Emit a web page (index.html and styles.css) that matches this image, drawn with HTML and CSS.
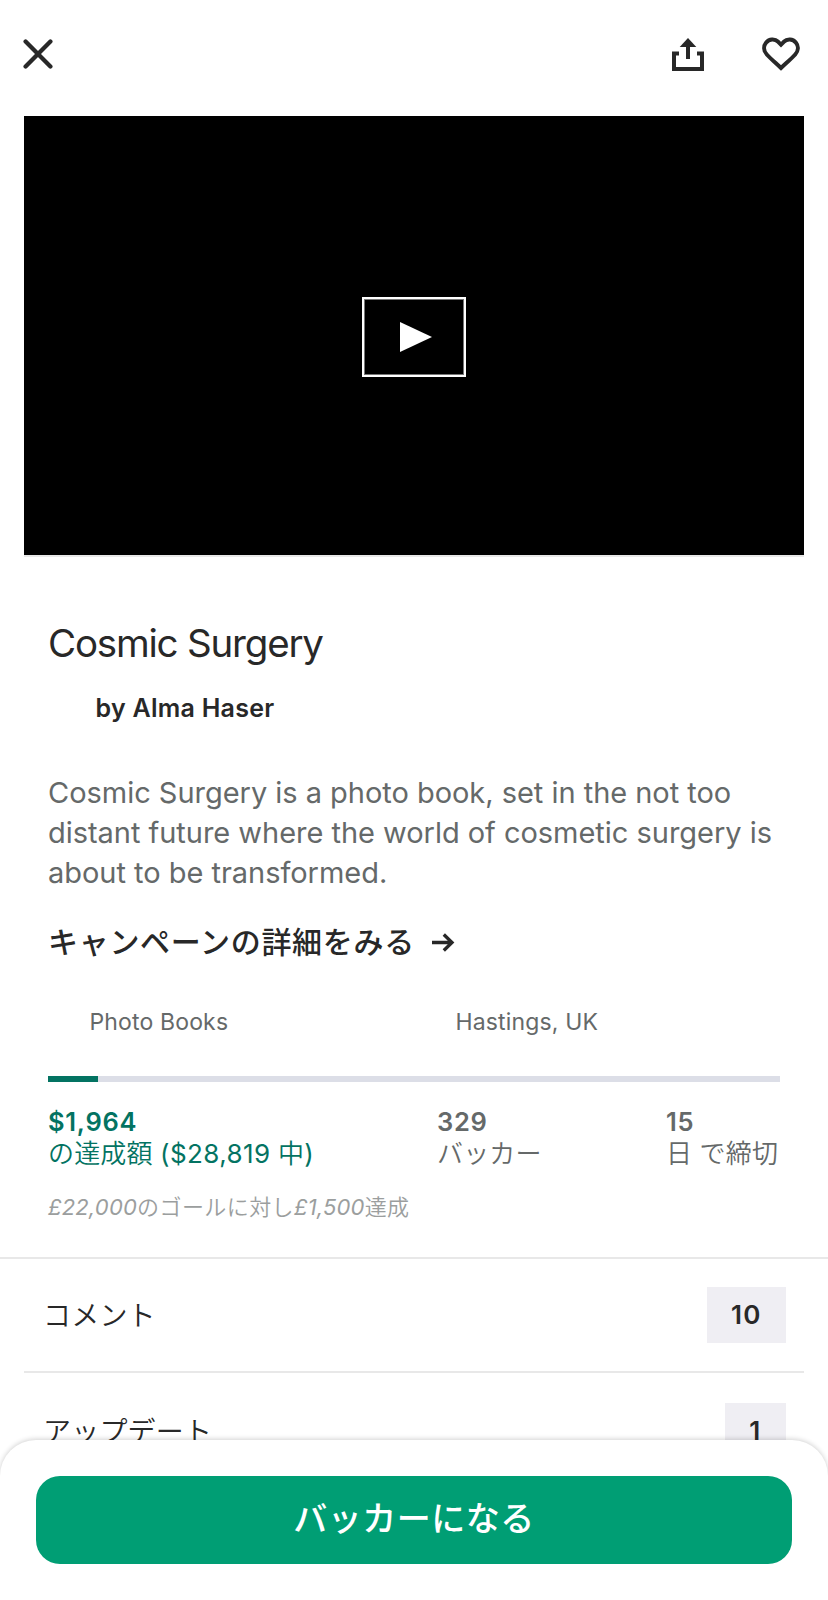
FILE: index.html
```html
<!DOCTYPE html>
<html lang="ja">
<head>
<meta charset="utf-8">
<title>Cosmic Surgery</title>
<link rel="stylesheet" href="styles.css">
</head>
<body>
<div class="screen">
  <header class="topbar">
    <svg class="close" width="30" height="30" viewBox="0 0 30 30"><path d="M2.6 2.6 27.4 27.4M27.4 2.6 2.6 27.4"/></svg>
    <div class="actions">
      <svg class="share" width="32" height="33" viewBox="0 0 32 33"><path d="M7 15.5H2V31H30V15.5H25M16 21V7"/><path class="solid" d="M16 0 24.3 9H7.7Z"/></svg>
      <svg class="heart" width="38" height="34" viewBox="0 0 38 34"><path d="M19 31C13.5 25.8 8.4 21.5 4.8 17.5 1.7 13.9 1.2 9.1 4 5.7 7.2 1.8 12.8 1.5 16.2 4.8L19 7.7 21.8 4.8C25.2 1.5 30.8 1.8 34 5.7 36.8 9.1 36.3 13.9 33.2 17.5 29.6 21.5 24.5 25.8 19 31Z"/></svg>
    </div>
  </header>
  <div class="video">
    <div class="play"><svg width="32" height="30" viewBox="0 0 32 30"><path d="M0 0 32 15 0 30Z"/></svg></div>
  </div>
  <main class="project">
    <h1 class="title">Cosmic Surgery</h1>
    <p class="creator">by Alma Haser</p>
    <p class="blurb">Cosmic Surgery is a photo book, set in the not too<br>distant future where the world of cosmetic surgery is<br>about to be transformed.</p>
    <a class="more"><span>キャンペーンの詳細をみる</span><svg width="23" height="19" viewBox="0 0 23 19"><path d="M0 9.5H20M11.8 1.5 20 9.5 11.8 17.5"/></svg></a>
    <div class="meta"><span class="category">Photo Books</span><span class="place">Hastings, UK</span></div>
    <div class="progress"><div class="progress-fill"></div></div>
    <div class="stats">
      <div class="stat pledged"><b>$1,964</b><span>の達成額 <i>($28,819</i> 中<i>)</i></span></div>
      <div class="stat"><b>329</b><span>バッカー</span></div>
      <div class="stat"><b>15</b><span>日 で締切</span></div>
    </div>
    <p class="goal"><em>£22,000</em>のゴールに対し<em>£1,500</em>達成</p>
  </main>
  <section class="rows">
    <div class="row"><span>コメント</span><b class="badge">10</b></div>
    <div class="row second"><span>アップデート</span><b class="badge">1</b></div>
  </section>
  <footer class="sheet"><button class="back">バッカーになる</button></footer>
</div>
</body>
</html>
```
FILE: styles.css
```css
* { box-sizing: border-box; }
body { margin: 0; background: #fff; color: #282828; font-family: Inter, "Noto Sans CJK JP", sans-serif; }
h1, p { margin: 0; }
svg { display: block; fill: none; }
.screen { position: relative; height: 1600px; overflow: hidden; }
.topbar { height: 116px; padding: 37px 28px 0 23px; display: flex; justify-content: space-between; align-items: flex-start; }
.close { margin-top: 2px; stroke: #282828; stroke-width: 4.3; stroke-linecap: round; }
.actions { display: flex; gap: 58px; }
.share, .heart { stroke: #282828; stroke-width: 4; }
.share { margin-top: 1px; }
.share .solid { fill: #282828; stroke: none; }
.video { height: 441px; margin: 0 24px; background: #000; border-bottom: 2px solid #e8e8e8; display: flex; align-items: center; justify-content: center; }
.play { width: 104px; height: 80px; margin-top: 3px; border: 2px solid #fff; outline: 1px solid #777; outline-offset: -3px; display: flex; align-items: center; justify-content: center; padding-left: 4px; }
.play svg { fill: #fff; }
.project { height: 702px; padding: 62px 48px 0; border-bottom: 2px solid #e8e8e8; }
.title { font-size: 38.5px; line-height: 48px; font-weight: 400; letter-spacing: -1.2px; }
.creator { padding-left: 47.5px; margin-top: 25px; font-size: 25px; line-height: 32px; font-weight: 600; letter-spacing: .27px; }
.blurb { margin-top: 49px; font-size: 29px; line-height: 40px; color: #656969; white-space: nowrap; letter-spacing: -.03px; }
.more { display: flex; align-items: center; gap: 17px; margin-top: 29px; font-size: 30px; line-height: 40px; font-weight: 500; letter-spacing: .7px; }
.more svg { stroke: #282828; stroke-width: 3.3; }
.meta { display: grid; grid-template-columns: 366px 1fr; margin-top: 44px; font-size: 23px; line-height: 32px; letter-spacing: .15px; color: #656969; padding-left: 41.5px; }
.progress { height: 6px; margin-top: 38px; background: #dcdee7; }
.progress-fill { width: 50px; height: 6px; background: #037362; }
.stats { display: grid; grid-template-columns: 389px 229px 1fr; margin-top: 24px; color: #656969; font-size: 26px; line-height: 32px; white-space: nowrap; }
.stat { display: flex; flex-direction: column; }
.stat b { font-size: 25.5px; font-weight: 600; letter-spacing: .75px; }
.stat span { font-weight: 350; letter-spacing: .15px; }
.stat i { font-style: normal; font-weight: 400; letter-spacing: .4px; }
.pledged { color: #037362; }
.goal { margin-top: 21px; font-size: 22px; line-height: 32px; font-weight: 350; letter-spacing: .42px; color: #9b9e9e; }
.goal em { font-weight: 400; letter-spacing: .2px; }
.rows { padding: 0 24px; }
.row { height: 114px; border-bottom: 2px solid #e8e8e8; padding: 28px 18px 0 19px; display: flex; align-items: flex-start; justify-content: space-between; font-size: 28px; line-height: 58px; letter-spacing: .2px; font-weight: 350; }
.row.second { padding-top: 30px; }
.badge { background: #efeef3; padding: 0 24.5px 0 24px; font-size: 26px; line-height: 56px; font-weight: 600; letter-spacing: 1.2px; }
.sheet { position: absolute; left: 0; right: 0; top: 1440px; height: 160px; padding: 36px; background: #fff; border-radius: 36px 36px 0 0; box-shadow: 0 -1px 5px rgba(0,0,0,.18); }
.back { display: block; width: 100%; height: 88px; border: 0; border-radius: 24px; background: #009e74; color: #fff; font: 500 34px/86px Inter, "Noto Sans CJK JP", sans-serif; letter-spacing: .5px; padding: 0 0 2px; }
```
